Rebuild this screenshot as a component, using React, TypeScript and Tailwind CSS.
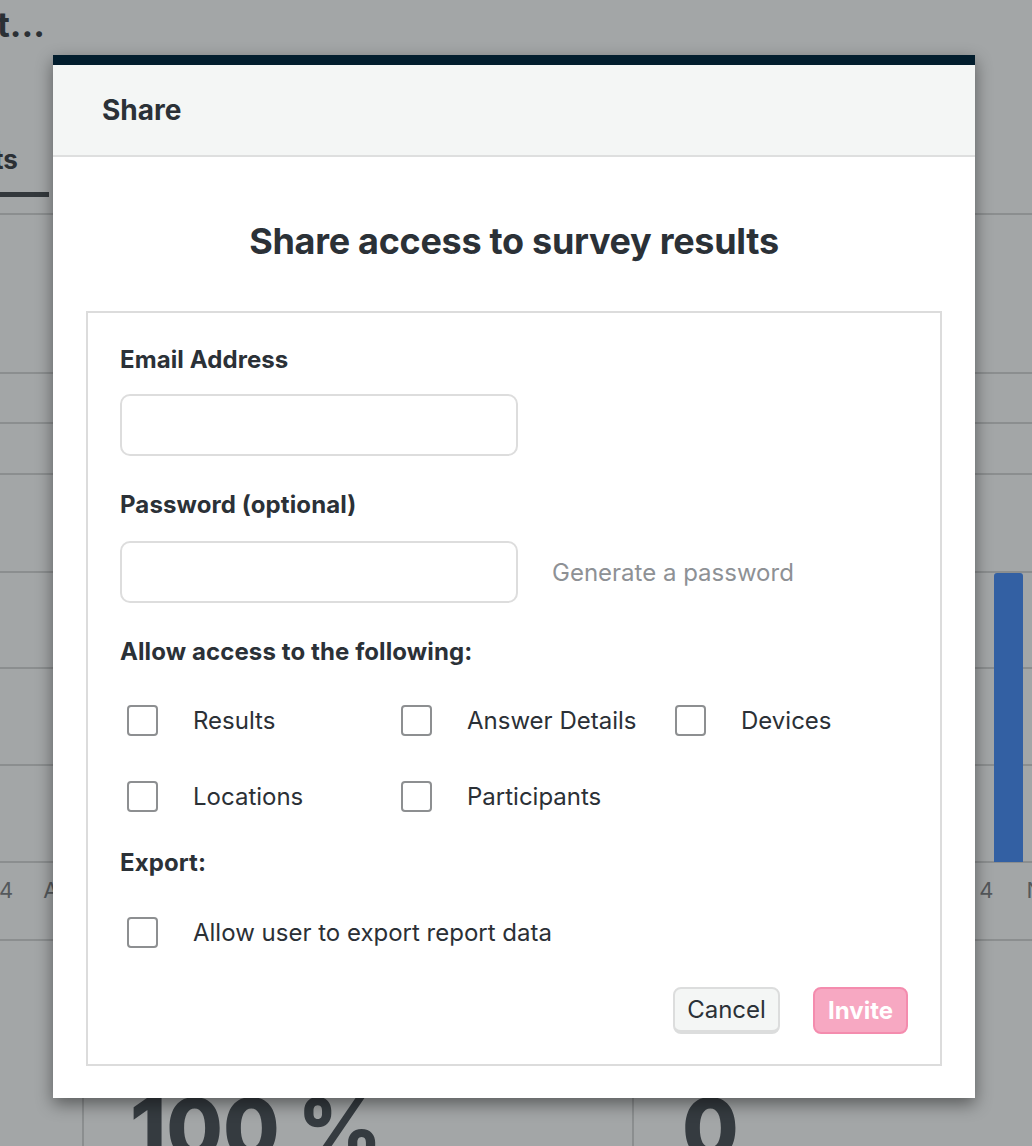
import React from "react";

function Check({ label }: { label: string }) {
  return (
    <label className="flex items-center">
      <span className="ml-[7px] block h-[31px] w-[31px] shrink-0 rounded-[4px] border-2 border-[#8d8f91] bg-white" />
      <span className="ml-[35px] text-[24px] leading-[30px] text-[#2b3036] whitespace-nowrap">{label}</span>
    </label>
  );
}

export default function App() {
  const gridYs = [373, 423, 474, 572, 668, 765, 862].map((y) => y - 215);
  return (
    <div
      className="relative h-[1146px] w-[1032px] overflow-hidden bg-[#a3a6a7] text-[#2e3338]"
      style={{ fontFamily: "Inter, 'Noto Sans', 'Liberation Sans', sans-serif" }}
    >
      {/* background page (dimmed) */}
      <div className="flex flex-col">
        <div className="h-[56px] pt-[2px]">
          <div className="-ml-[3px] text-[35px] font-bold leading-[44px] text-[#2b3035]">t...</div>
        </div>
        <div className="flex h-[159px] flex-col border-b-2 border-[#8b8e8f]">
          <div className="mt-[86px] -ml-[6px] text-[26px] font-bold leading-[36px] text-[#2b3035]">ts</div>
          <div className="mt-[14px] h-[5px] w-[49px] bg-[#33383c]" />
        </div>
        <svg width="1032" height="648" className="block">
          {gridYs.map((y) => (
            <rect key={y} x="0" y={y - 1} width="1032" height="2" fill="#8b8e8f" />
          ))}
          <path d="M994 361 a3 3 0 0 1 3 -3 h23 a3 3 0 0 1 3 3 V647 H994 Z" fill="#3360a3" />
        </svg>
        <div className="flex h-[78px] items-start justify-between border-b-2 border-[#8b8e8f] pt-[13px] text-[22px] leading-[28px] text-[#55595c]">
          <div className="flex">
            <span className="-ml-[1px]">4</span>
            <span className="ml-[30px]">A</span>
          </div>
          <div className="flex">
            <span>4</span>
            <span className="ml-[33px] -mr-[11px]">N</span>
          </div>
        </div>
        <div className="flex h-[206px]">
          <div className="w-[84px] border-r-2 border-[#8b8e8f]" />
          <div className="w-[550px] border-r-2 border-[#8b8e8f] pl-[46px] pt-[147px] text-[82px] font-extrabold leading-[82px] text-[#353b40]">
            100 %
          </div>
          <div className="pl-[48px] pt-[147px] text-[82px] font-extrabold leading-[82px] text-[#353b40]">0</div>
        </div>
      </div>

      {/* modal */}
      <div className="absolute left-[53px] top-[55px] flex h-[1043px] w-[922px] flex-col border-t-[10px] border-[#021d2d] bg-white shadow-[0_6px_16px_rgba(0,0,0,0.45)]">
        <div className="flex h-[92px] items-center border-b-2 border-[#dedfdf] bg-[#f4f6f5] pl-[49px]">
          <span className="text-[28px] font-bold leading-[36px] text-[#2b3137]">Share</span>
        </div>
        <div className="flex flex-1 flex-col px-[33px] pb-[32px]">
          <h1 className="mt-[61px] h-[93px] text-center text-[36px] font-bold leading-[46px] tracking-[-0.3px] text-[#2b3137]">
            Share access to survey results
          </h1>
          <div className="flex flex-1 flex-col border-2 border-[#dcdcdc] px-[32px] pt-[32px]">
            <div className="text-[24px] font-bold leading-[30px] tracking-[0.1px] text-[#2b3137]">Email Address</div>
            <input className="mt-[19px] h-[62px] w-[398px] rounded-[10px] border-2 border-[#dddddd] bg-white outline-none" />
            <div className="mt-[34px] text-[24px] font-bold leading-[30px] tracking-[0.1px] text-[#2b3137]">Password (optional)</div>
            <div className="mt-[21px] flex items-center">
              <input className="h-[62px] w-[398px] rounded-[10px] border-2 border-[#dddddd] bg-white outline-none" />
              <span className="ml-[34px] mt-[2px] text-[24px] leading-[30px] text-[#8e9195]">Generate a password</span>
            </div>
            <div className="mt-[34px] text-[24px] font-bold leading-[30px] tracking-[0.1px] text-[#2b3137]">Allow access to the following:</div>
            <div className="mt-[38px] grid grid-cols-[274px_274px_274px] gap-y-[45px]">
              <Check label="Results" />
              <Check label="Answer Details" />
              <Check label="Devices" />
              <Check label="Locations" />
              <Check label="Participants" />
            </div>
            <div className="mt-[36px] text-[24px] font-bold leading-[30px] tracking-[0.1px] text-[#2b3137]">Export:</div>
            <div className="mt-[39px]">
              <Check label="Allow user to export report data" />
            </div>
            <div className="mt-[39px] flex justify-end gap-[33px]">
              <button className="h-[47px] w-[107px] rounded-[8px] border-2 border-[#dcdddd] border-b-[4px] bg-[#f4f6f5] text-[24px] leading-[30px] text-[#2b3137]">
                Cancel
              </button>
              <button className="h-[47px] w-[95px] rounded-[8px] border-2 border-[#f48cae] bg-[#f7a8c2] text-[24px] font-bold leading-[30px] text-white">
                Invite
              </button>
            </div>
          </div>
        </div>
      </div>
    </div>
  );
}
